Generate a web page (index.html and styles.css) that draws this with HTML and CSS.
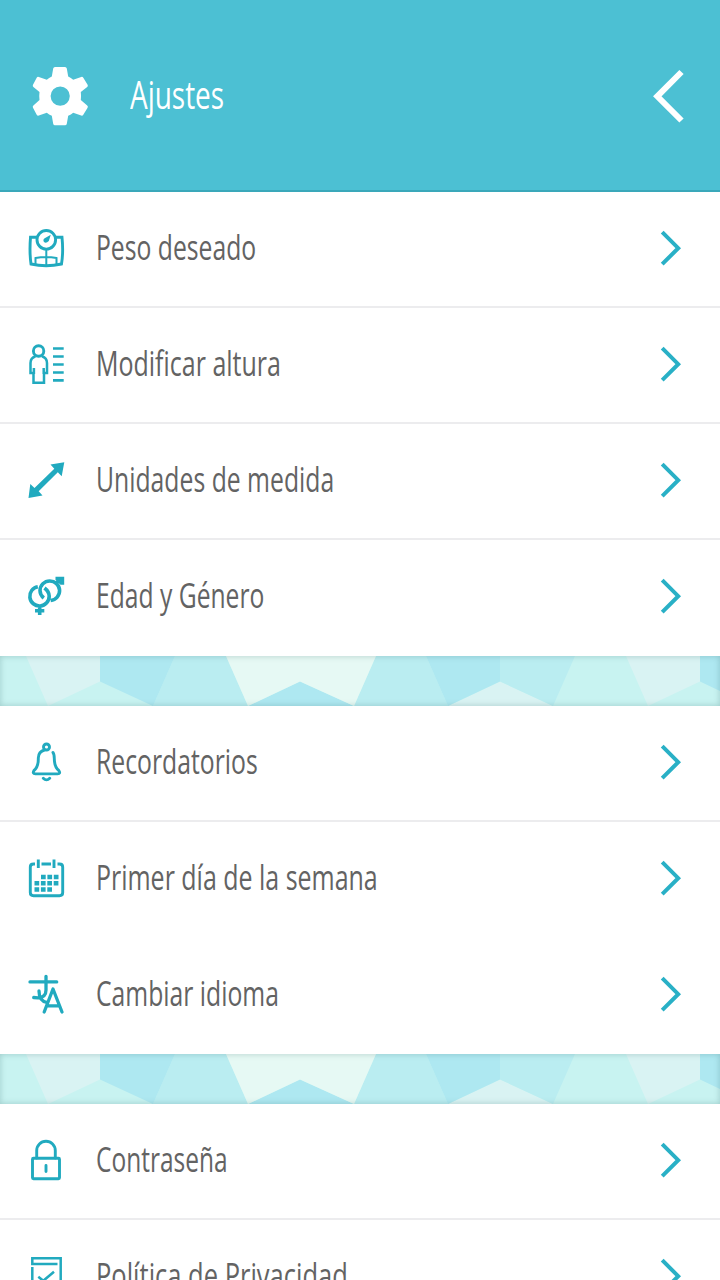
FILE: index.html
```html
<!DOCTYPE html>
<html lang="es">
<head>
<meta charset="utf-8">
<title>Ajustes</title>
<link rel="stylesheet" href="styles.css">
</head>
<body>
<svg class="defs" aria-hidden="true">
  <symbol id="chevron" viewBox="0 0 24 40"><path d="M3.200 4.200 19.200 20.200 3.200 36.200" fill="none" stroke="#29b0c6" stroke-width="4"/></symbol>
  <symbol id="mosaic" viewBox="0 0 720 50">
    <rect width="720" height="50" fill="#c8f3f1"/>
    <path fill="#d9f3f3" d="M26 0H100V25.500L48 50ZM626 0H700V25.500L648 50ZM448 50 500 25.500 553 50Z"/>
    <path fill="#baedf1" d="M175 0H226L248 50H153ZM376 0H426L448 50H354ZM500 0H575L553 50 500 25.500Z"/>
    <path fill="#aee8f1" d="M100 0H175L153 50 100 25.500ZM248 50 300 25.500 354 50ZM426 0H500V25.500L448 50ZM700 0H720V35L700 25.500Z"/>
    <path fill="#e6f9f4" d="M226 0H376L354 50 300 25.500 248 50Z"/>
  </symbol>
</svg>
<header class="header">
  <svg class="gear" viewBox="0 0 64 64"><path fill="#fff" fill-rule="evenodd" d="M27 3H37Q38.500 3 38.800 4.500L40.200 12.500Q43 13.700 45.200 15.800L53.200 13Q54.500 12.500 55.300 13.700L59.600 20.800Q60.300 22 59.200 23L52.800 28Q53.300 32 52.800 36L59.200 41.500Q60.300 42.500 59.600 43.700L55.300 50.800Q54.500 52 53.200 51.500L45.200 48.700Q43 50.500 40.200 51.700L38.800 59.700Q38.500 61.200 37 61.200H27Q25.500 61.200 25.200 59.700L23.800 51.700Q21 50.500 18.800 48.700L10.800 51.500Q9.500 52 8.700 50.800L5 43.700Q4.300 42.500 5.400 41.500L11.500 36Q11 32 11.500 28L5.400 23Q4.300 22 5 20.800L8.700 13.700Q9.500 12.500 10.800 13L18.800 15.800Q21 13.700 23.800 12.500L25.200 4.500Q25.500 3 27 3ZM32.200 22.500A9.600 9.600 0 1 0 32.200 41.700A9.600 9.600 0 1 0 32.200 22.500Z"/></svg>
  <h1 class="title">Ajustes</h1>
  <svg class="back" viewBox="0 0 40 60"><path d="M31.500 6 7.300 30.300 31.500 54.500" fill="none" stroke="#fff" stroke-width="6"/></svg>
</header>
<main>
  <section class="group">
    <div class="row">
      <svg class="icon" viewBox="0 0 64 64"><circle cx="30.300" cy="23.800" r="9.300"/><path d="M21 21.300H14.500Q13.300 36 15 48Q30 51.500 45.500 48Q47.500 36 46 21.300H39.500"/><path stroke-width="2" d="M30.300 33V49M19.500 48.500V42Q30 40 40.500 42V48.500"/><path class="solid" d="M34.800 18.800 32.800 25Q30 28 28 26Q26.500 23.800 28.700 22.200Z"/></svg>
      <span class="label peso">Peso deseado</span><svg class="go"><use href="#chevron"/></svg>
    </div>
    <div class="row">
      <svg class="icon" viewBox="0 0 64 64"><circle cx="22.600" cy="19" r="5.200"/><path d="M19.500 24.300Q14.500 26 14.500 31V41H17.500V50.700H28V41H31V31Q31 26 26 24.300M17.900 36V42M27.700 36V42" stroke-width="2.500"/><path d="M37 16.500H47.700M37 24.500H47.700M37 32.500H47.700M37 40.500H47.700M37 48.300H47.700" stroke-width="2.700"/></svg>
      <span class="label altura">Modificar altura</span><svg class="go"><use href="#chevron"/></svg>
    </div>
    <div class="row">
      <svg class="icon" viewBox="0 0 64 64"><path class="solid" d="M48.300 14.300 45.700 28.300 41.800 24.300 22.700 43.300 26.500 47.500 12.500 50 14.300 36 18.500 40 38.300 20.700 34.500 16.500Z"/></svg>
      <span class="label unidades">Unidades de medida</span><svg class="go"><use href="#chevron"/></svg>
    </div>
    <div class="row last">
      <svg class="icon" viewBox="0 0 64 64"><path stroke-width="3.600" d="M21.800 22.700A9.700 9.700 0 1 0 33.200 32Q33 27.500 28.500 24M23.700 41V51M19 46.800H28.300M34.700 36.500A9.800 9.800 0 1 0 24 26.500Q24 31 27.800 34M40.500 19 45 15.500"/><path class="solid" d="M39.500 12.800H48.200V20.800H44.500L39.500 16Z"/></svg>
      <span class="label edad">Edad y Género</span><svg class="go"><use href="#chevron"/></svg>
    </div>
  </section>
  <div class="divider"><svg viewBox="0 0 720 50"><use href="#mosaic"/></svg></div>
  <section class="group">
    <div class="row">
      <svg class="icon" viewBox="0 0 64 64"><circle cx="30.500" cy="17" r="3"/><path stroke-linecap="round" d="M28.500 20Q22.500 21.500 22.300 28Q22.500 37 18 40.500Q16 43.700 19.500 43.900H41.500Q45 43.700 42.800 40.500Q38.300 37 38.300 28.500Q38.200 24 37 22.500M27.300 48.200Q30.500 51.500 33.700 48.200"/></svg>
      <span class="label recordatorios">Recordatorios</span><svg class="go"><use href="#chevron"/></svg>
    </div>
    <div class="row last">
      <svg class="icon" viewBox="0 0 64 64"><path d="M19 18H17.500Q14.300 18 14.300 21V46.500Q14.300 49.700 17.500 49.700H43.500Q46.700 49.700 46.700 46.500V21Q46.700 18 43.500 18H41.500M25.500 18H35M22.300 13.500V22M38 13.500V22"/><path stroke-width="4.400" stroke-dasharray="4.700 1.700" d="M25 31H43.500M18.500 37.300H43.500M18.500 43.500H36"/></svg>
      <span class="label semana">Primer día de la semana</span><svg class="go"><use href="#chevron"/></svg>
    </div>
    <div class="row last">
      <svg class="icon" viewBox="0 0 64 64"><path stroke-width="3.300" stroke-linecap="round" stroke-linejoin="round" d="M14 19.900H40.700M30 14.300V28Q30 35.500 22 35.800L17.700 35.500M23 29Q23 39 31 40.500M28.200 50 37 27 46 50M31.500 43.800H43"/></svg>
      <span class="label idioma">Cambiar idioma</span><svg class="go"><use href="#chevron"/></svg>
    </div>
  </section>
  <div class="divider"><svg viewBox="0 0 720 50"><use href="#mosaic"/></svg></div>
  <section class="group">
    <div class="row">
      <svg class="icon" viewBox="0 0 64 64"><rect x="16.500" y="30.200" width="27" height="20.600" rx="1"/><path d="M20.700 30V22.500A9.300 9.300 0 0 1 39.300 22.500V30M30 37.500V43.500" stroke-linecap="round"/></svg>
      <span class="label contrasena">Contraseña</span><svg class="go"><use href="#chevron"/></svg>
    </div>
    <div class="row">
      <svg class="icon" viewBox="0 0 64 64"><path stroke-width="2.500" d="M41.500 20H16.300V14.200H44.700V50H16.300V23M22.300 32.800 27.300 36.800 38 27.800"/></svg>
      <span class="label politica">Política de Privacidad</span><svg class="go"><use href="#chevron"/></svg>
    </div>
  </section>
</main>
</body>
</html>
```
FILE: styles.css
```css
* { box-sizing: border-box; }
html, body { height: 1280px; overflow: hidden; }
body { margin: 0; background: #fff; font-family: "Open Sans", "Noto Sans", sans-serif; }
svg { display: block; flex: none; }
.defs { display: none; }
.header {
  display: flex; align-items: center; height: 192px; padding: 0 30px 0 28px;
  background: #4cc0d3; box-shadow: inset 0 -2px #3aa8ba;
}
.gear { width: 64px; height: 64px; }
.title {
  margin: 0 auto 0 38px; padding-bottom: 4px; font-size: 38px; line-height: 52px; font-weight: 400;
  color: #fff; white-space: nowrap; transform-origin: left; transform: scaleX(.735);
}
.back { width: 40px; height: 60px; }
.row {
  display: flex; align-items: center; height: 116px; padding: 0 37px 2px 16px;
  border-bottom: 2px solid #ececee;
}
.row.last { border-bottom-color: transparent; }
.icon { width: 64px; height: 64px; fill: none; stroke: #21aabf; stroke-width: 2.9; }
.icon .solid { fill: #21aabf; stroke: none; }
.label {
  margin: 0 auto 0 16px; padding-bottom: 2px; font-size: 34px; line-height: 46px;
  color: #636363; white-space: nowrap; transform-origin: left; transform: scaleX(var(--fit));
}
.peso { --fit: .727; }
.altura { --fit: .735; }
.unidades { --fit: .728; }
.edad { --fit: .725; }
.recordatorios { --fit: .728; }
.semana { --fit: .734; }
.idioma { --fit: .727; }
.contrasena { --fit: .72; }
.politica { --fit: .75; }
.go { width: 24px; height: 40px; }
.divider { position: relative; height: 50px; }
.divider svg { width: 720px; height: 50px; }
.divider::after { content: ""; position: absolute; inset: 0; box-shadow: inset 0 0 6px rgba(0, 60, 60, .22); }
```
